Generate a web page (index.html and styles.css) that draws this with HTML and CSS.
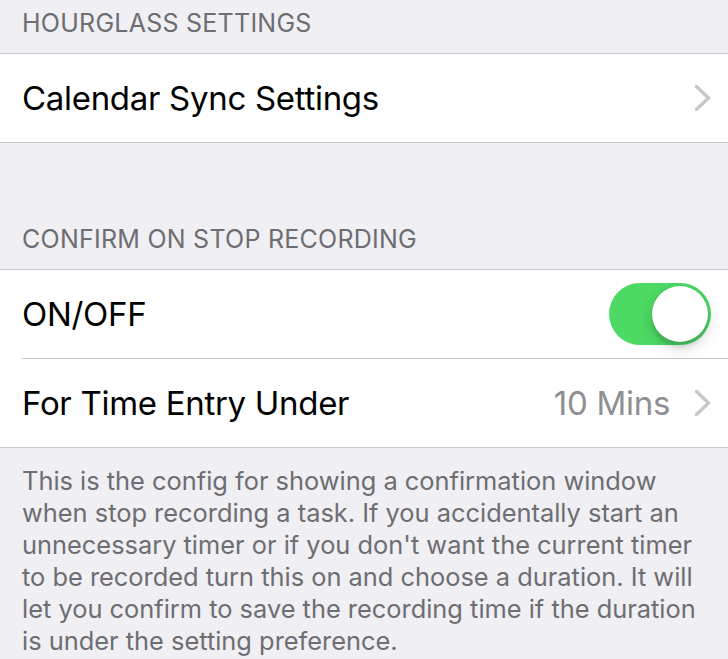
FILE: index.html
```html
<!DOCTYPE html>
<html lang="en">
<head>
<meta charset="utf-8">
<title>Settings</title>
<link rel="stylesheet" href="styles.css">
</head>
<body>
<div class="screen">
  <div class="section-header first">HOURGLASS SETTINGS</div>
  <div class="group">
    <div class="row">
      <span class="label">Calendar Sync Settings</span>
      <span class="accessory">
        <svg class="chevron" width="16" height="26" viewBox="0 0 16 26"><polyline points="1.5,1.5 13.5,13 1.5,24.5" fill="none" stroke="#c7c7cc" stroke-width="3.4" stroke-linecap="square" stroke-linejoin="miter"/></svg>
      </span>
    </div>
  </div>
  <div class="section-header second">CONFIRM ON STOP RECORDING</div>
  <div class="group">
    <div class="row">
      <span class="label">ON/OFF</span>
      <span class="switch on"><span class="knob"></span></span>
    </div>
    <div class="row inset">
      <span class="label">For Time Entry Under</span>
      <span class="accessory">
        <span class="value">10 Mins</span>
        <svg class="chevron" width="16" height="26" viewBox="0 0 16 26"><polyline points="1.5,1.5 13.5,13 1.5,24.5" fill="none" stroke="#c7c7cc" stroke-width="3.4" stroke-linecap="square" stroke-linejoin="miter"/></svg>
      </span>
    </div>
  </div>
  <div class="footer">
    <span class="line">This is the config for showing a confirmation window</span>
    <span class="line">when stop recording a task. If you accidentally start an</span>
    <span class="line">unnecessary timer or if you don't want the current timer</span>
    <span class="line">to be recorded turn this on and choose a duration. It will</span>
    <span class="line">let you confirm to save the recording time if the duration</span>
    <span class="line">is under the setting preference.</span>
  </div>
</div>
</body>
</html>
```

FILE: styles.css
```css
html, body {
  margin: 0;
  padding: 0;
  background: #efeff4;
}
.screen {
  width: 728px;
  height: 659px;
  overflow: hidden;
  font-family: "Inter", "Liberation Sans", sans-serif;
  background: #efeff4;
}
.section-header {
  box-sizing: border-box;
  padding-left: 22px;
  font-size: 25px;
  line-height: 30px;
  color: #6d6d72;
  letter-spacing: 0.25px;
  display: flex;
  align-items: flex-end;
}
.section-header.first {
  height: 53px;
  padding-bottom: 15px;
}
.section-header.second {
  height: 126px;
  padding-bottom: 15px;
}
.group {
  background: #fff;
  border-top: 1px solid #c8c7cc;
  border-bottom: 1px solid #c8c7cc;
}
.row {
  height: 88px;
  box-sizing: border-box;
  padding: 0 17px 0 22px;
  display: flex;
  align-items: center;
  justify-content: space-between;
}
.row.inset {
  height: 89px;
  border-top: 1px solid #c8c7cc;
  margin-left: 22px;
  padding-left: 0;
}
.label {
  font-size: 33px;
  color: #000;
  letter-spacing: -0.3px;
}
.accessory {
  display: flex;
  align-items: center;
  gap: 25px;
}
.value {
  font-size: 33px;
  color: #8e8e93;
  letter-spacing: -0.3px;
}
.chevron {
  display: block;
}
.switch {
  width: 102px;
  height: 62px;
  border-radius: 31px;
  background: #4cd964;
  display: flex;
  align-items: center;
  justify-content: flex-end;
  padding: 0 3px;
  box-sizing: border-box;
}
.knob {
  width: 56px;
  height: 56px;
  border-radius: 50%;
  background: #fff;
  box-shadow: 0 6px 14px rgba(0,0,0,0.18), 0 6px 2px rgba(0,0,0,0.06), 0 0 0 1px rgba(0,0,0,0.04);
}
.footer {
  padding: 17px 22px 0 22px;
  font-size: 25.4px;
  line-height: 32px;
  color: #6d6d72;
}
.footer .line {
  display: block;
  white-space: nowrap;
}
```
